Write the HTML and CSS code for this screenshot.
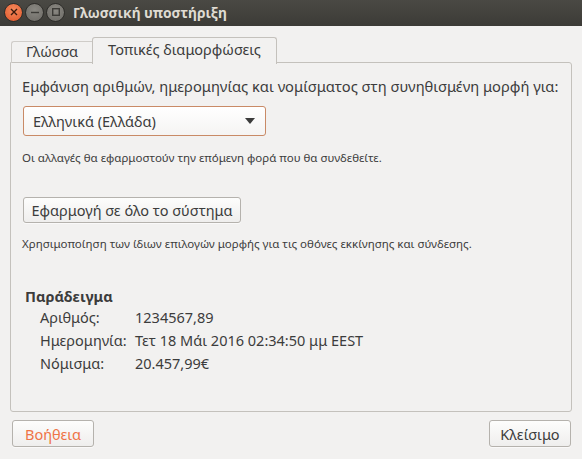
FILE: index.html
```html
<!DOCTYPE html>
<html>
<head>
    <title>Γλωσσική υποστήριξη</title>
    <link rel="stylesheet" href="styles.css">
</head>
<body>

<div class="window">
    <div class="titlebar">
        <div class="wbtn close">
            <svg width="8" height="8" viewBox="0 0 8 8"><path d="M1 1L7 7M7 1L1 7" stroke="#3a1a0d" stroke-width="1.4"/></svg>
        </div>
        <div class="wbtn">
            <svg width="8" height="8" viewBox="0 0 8 8"><path d="M0 4.5H8" stroke="#3c3b37" stroke-width="1.4"/></svg>
        </div>
        <div class="wbtn">
            <svg width="8" height="8" viewBox="0 0 8 8"><rect x="0.7" y="0.7" width="6.6" height="6.6" fill="none" stroke="#3c3b37" stroke-width="1.4"/></svg>
        </div>
        <span class="title">Γλωσσική υποστήριξη</span>
    </div>

    <div class="content">
        <div class="tabs">
            <div class="tab">Γλώσσα</div>
            <div class="tab active">Τοπικές διαμορφώσεις</div>
        </div>
        <div class="panel">
            <p class="lead">Εμφάνιση αριθμών, ημερομηνίας και νομίσματος στη συνηθισμένη μορφή για:</p>
            <div class="combo">
                <span>Ελληνικά (Ελλάδα)</span>
                <svg width="10" height="6" viewBox="0 0 10 6"><path d="M0 0H10L5 6Z" fill="#3c3c3c"/></svg>
            </div>
            <p class="note first">Οι αλλαγές θα εφαρμοστούν την επόμενη φορά που θα συνδεθείτε.</p>
            <button class="btn apply">Εφαρμογή σε όλο το σύστημα</button>
            <p class="note">Χρησιμοποίηση των ίδιων επιλογών μορφής για τις οθόνες εκκίνησης και σύνδεσης.</p>

            <div class="example">
                <h4>Παράδειγμα</h4>
                <div class="rows">
                    <span>Αριθμός:</span><span>1234567,89</span>
                    <span>Ημερομηνία:</span><span>Τετ 18 Μάι 2016 02:34:50 μμ EEST</span>
                    <span>Νόμισμα:</span><span>20.457,99€</span>
                </div>
            </div>
        </div>
        <div class="actions">
            <button class="btn help">Βοήθεια</button>
            <button class="btn">Κλείσιμο</button>
        </div>
    </div>
</div>

</body>
</html>
```

FILE: styles.css
```css
body {
    margin: 0;
    padding: 0;
    background-color: #f2f1f0;
    font-family: "Noto Sans", "DejaVu Sans", sans-serif;
    color: #3c3c3c;
}
.window {
    width: 582px;
    height: 459px;
    overflow: hidden;
}
.titlebar {
    height: 26px;
    background: linear-gradient(#4a4944, #3c3b37);
    display: flex;
    align-items: center;
    padding-left: 4px;
}
.wbtn {
    width: 17px;
    height: 17px;
    border-radius: 50%;
    margin-right: 2px;
    background: radial-gradient(circle at 50% 35%, #8a8882, #6b6964);
    border: 1px solid #2e2d2a;
    display: flex;
    align-items: center;
    justify-content: center;
    margin-top: -2px;
}
.wbtn.close {
    background: radial-gradient(circle at 50% 35%, #f58a5c, #e0562a);
}
.title {
    margin-left: 6px;
    margin-top: -2px;
    font-weight: bold;
    font-size: 13.8px;
    color: #dfdbd2;
}
.content {
    padding: 11px 10px 0 10px;
}
.tabs {
    display: flex;
    align-items: flex-end;
    padding-left: 1px;
    height: 26px;
    position: relative;
    z-index: 1;
    margin-bottom: -1px;
}
.tab {
    height: 22px;
    width: 81px;
    box-sizing: border-box;
    border: 1px solid #cfccc8;
    border-right: none;
    border-bottom: none;
    border-radius: 3px 0 0 0;
    text-align: center;
    font-size: 14.5px;
    line-height: 18px;
}
.tab.active {
    width: 185px;
    height: 27px;
    border: 1px solid #c4c1bc;
    border-bottom: none;
    border-radius: 3px 3px 0 0;
    background: #f2f1f0;
    line-height: 23px;
    margin-bottom: -1px;
}
.panel {
    height: 350px;
    box-sizing: border-box;
    border: 1px solid #c4c1bc;
    border-radius: 0 3px 3px 3px;
    padding: 13px 11px 0 11px;
}
.lead {
    margin: 0;
    font-size: 14.7px;
    line-height: 20px;
}
.combo {
    margin: 10px 0 0 1px;
    width: 243px;
    height: 30px;
    box-sizing: border-box;
    border: 1px solid #c98a66;
    border-radius: 3px;
    background: linear-gradient(#ffffff, #f5f4f3);
    display: flex;
    align-items: center;
    justify-content: space-between;
    padding: 0 10px 0 9px;
    font-size: 14.5px;
}
.note {
    margin: 13px 0 0 0;
    font-size: 11.5px;
    line-height: 16px;
}
.note.first {
    margin-top: 14px;
}
.btn {
    font-family: inherit;
    color: #3c3c3c;
    font-size: 14.5px;
    height: 27px;
    padding: 0 7px;
    border: 1px solid #b5b2ad;
    border-radius: 3px;
    background: linear-gradient(#fdfdfc, #efeeed);
    box-shadow: 0 1px 0 rgba(255,255,255,0.6);
    white-space: nowrap;
}
.apply {
    margin: 31px 0 0 1px;
    display: block;
    height: 26px;
    min-width: 218px;
}
.example {
    margin-top: 34px;
    padding-left: 3px;
}
.example h4 {
    margin: 0;
    font-size: 14.5px;
    line-height: 20px;
}
.rows {
    display: grid;
    grid-template-columns: 95px auto;
    row-gap: 3px;
    padding-left: 15px;
    margin-top: 1px;
    font-size: 14.5px;
    line-height: 20px;
}
.actions {
    display: flex;
    justify-content: space-between;
    padding: 8px 1px 0 2px;
}
.actions .btn {
    width: 82px;
}
.help {
    color: #ef7446;
}
```
